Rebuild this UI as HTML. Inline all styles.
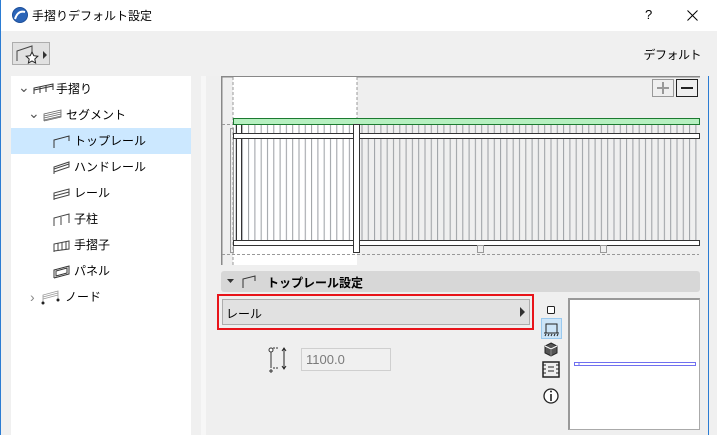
<!DOCTYPE html>
<html><head><meta charset="utf-8"><style>
*{margin:0;padding:0;box-sizing:border-box}
body{width:717px;height:435px;overflow:hidden;background:#f0f0f0;font-family:"Liberation Sans","Noto Sans CJK JP",sans-serif;font-size:12px;color:#000;position:relative}
.abs{position:absolute}
.title{left:0;top:0;width:717px;height:31px;background:#fff;border-left:1px solid #2b7cd3}
.tree{left:11px;top:76px;width:180px;height:359px;background:#fff}
.item{position:absolute;left:0;width:180px;height:26px;line-height:26px}
.sel{background:#cce8ff}
.lbl{position:absolute;font-size:12px}
</style></head><body>
<div class="abs title">
  <svg class="abs" style="left:11px;top:7px" width="16" height="16" viewBox="0 0 16 16"><circle cx="8" cy="8" r="7.5" fill="#2a64b8"/><path d="M3 12 Q6 3 13 5" stroke="#fff" stroke-width="2" fill="none"/><circle cx="8" cy="8" r="7.5" fill="none" stroke="#1d4f99"/></svg>
  <div class="lbl" style="left:31px;top:7px;font-size:12px">手摺りデフォルト設定</div>
  <div class="lbl" style="left:644px;top:7px;font-size:13px">?</div>
  <svg class="abs" style="left:686px;top:10px" width="11" height="11"><path d="M0.5 0.5L10.5 10.5M10.5 0.5L0.5 10.5" stroke="#000" stroke-width="1"/></svg>
</div>
<div class="abs" style="left:0;top:31px;width:1px;height:404px;background:#2b7cd3"></div>
<div class="abs" style="left:12px;top:42px;width:38px;height:23px;border:1px solid #adadad;background:#e1e1e1"></div>
<svg class="abs" style="left:14px;top:44px" width="36" height="20"><path d="M3 17V7L18 2V10" stroke="#444" fill="none"/><path d="M18 8l1.8 3.7 4 .5-3 2.8.8 4-3.6-2-3.6 2 .8-4-3-2.8 4-.5z" fill="#fff" stroke="#222"/><path d="M29 7l4 4-4 4z" fill="#333"/></svg>
<div class="lbl" style="right:16px;top:46px;white-space:nowrap;letter-spacing:-0.5px">デフォルト</div>

<div class="abs tree">
  <div class="item" style="top:0"><span class="lbl" style="left:7px;top:-2px;color:#555;font-size:14px">⌄</span>
    <svg class="abs" style="left:22px;top:7px" width="22" height="12"><path d="M1 11V5L20 1V7M7 4V10M13 3V9M1 7L20 3" stroke="#333" fill="none"/></svg>
    <span class="lbl" style="left:45px">手摺り</span></div>
  <div class="item" style="top:26px"><span class="lbl" style="left:17px;top:-2px;color:#555;font-size:14px">⌄</span>
    <svg class="abs" style="left:32px;top:7px" width="20" height="13"><path d="M1 12V5L18 1V8L1 12M1 7L18 3M1 9L18 5M1 11L18 7" stroke="#666" fill="none" stroke-width=".8"/></svg>
    <span class="lbl" style="left:55px">セグメント</span></div>
  <div class="item sel" style="top:52px">
    <svg class="abs" style="left:42px;top:7px" width="18" height="14"><path d="M1 13V5L16 1V6" stroke="#333" fill="none"/></svg>
    <span class="lbl" style="left:63px">トップレール</span></div>
  <div class="item" style="top:78px">
    <svg class="abs" style="left:42px;top:7px" width="18" height="14"><path d="M1 13V6L16 1V6L1 11M1 8L16 3" stroke="#444" fill="none"/></svg>
    <span class="lbl" style="left:63px">ハンドレール</span></div>
  <div class="item" style="top:104px">
    <svg class="abs" style="left:42px;top:7px" width="18" height="14"><path d="M1 13V6L16 2V8L1 12M1 9L16 5" stroke="#444" fill="none"/></svg>
    <span class="lbl" style="left:63px">レール</span></div>
  <div class="item" style="top:130px">
    <svg class="abs" style="left:42px;top:7px" width="18" height="14"><path d="M1 13V5L16 1V10M8 4V12" stroke="#444" fill="none"/></svg>
    <span class="lbl" style="left:63px">子柱</span></div>
  <div class="item" style="top:156px">
    <svg class="abs" style="left:42px;top:7px" width="18" height="14"><path d="M1 13V5L16 2V10L1 12M5 4V12M9 3V11M13 3V10" stroke="#444" fill="none"/></svg>
    <span class="lbl" style="left:63px">手摺子</span></div>
  <div class="item" style="top:182px">
    <svg class="abs" style="left:42px;top:7px" width="18" height="14"><path d="M1 13V5L16 1V9L1 13M3 11V6L14 3V8Z" stroke="#333" fill="none"/></svg>
    <span class="lbl" style="left:63px">パネル</span></div>
  <div class="item" style="top:208px"><span class="lbl" style="left:19px;color:#888;font-size:14px">›</span>
    <svg class="abs" style="left:30px;top:5px" width="20" height="16"><path d="M2 14V6L17 2V11M2 8L17 4M2 10L17 6" stroke="#999" fill="none" stroke-width=".8"/><circle cx="2" cy="14" r="1.5" fill="#222"/><circle cx="17" cy="11" r="1.5" fill="#222"/></svg>
    <span class="lbl" style="left:54px">ノード</span></div>
</div>
<div class="abs" style="left:201px;top:76px;width:5px;height:359px;background:#f7f7f7"></div>
<div class="abs" style="left:206px;top:76px;width:502px;height:359px;background:#efefef"></div>
<div class="abs" style="left:708px;top:76px;width:1px;height:359px;background:#2b7cd3"></div>

<svg class="abs" style="left:221px;top:76px" width="480" height="190">
  <defs><pattern id="b" x="12" y="0" width="6.3" height="10" patternUnits="userSpaceOnUse"><rect x="2.5" y="0" width="1" height="10" fill="#9a9ea2"/></pattern></defs>
  <rect x="0" y="0" width="479" height="189" fill="#efefef"/>
  <path d="M0.5 189V0.5H479" stroke="#888" stroke-width="2" fill="none"/>
  <rect x="12" y="1" width="124" height="188" fill="#fff"/>
  <path d="M12 1V189M136 1V48" stroke="#999" stroke-dasharray="3,2"/>
  <path d="M1 48.5H12M1 178.5H478" stroke="#999" stroke-dasharray="3,2"/>
  <rect x="12" y="49" width="466" height="116" fill="url(#b)"/>
  <rect x="9.5" y="52.5" width="3" height="124" fill="none" stroke="#999"/>
  <rect x="15.5" y="48.5" width="5" height="118" fill="none" stroke="#333"/>
  <rect x="12.5" y="42.5" width="466" height="6" fill="#b6f0c0" stroke="#1c7a30"/>
  <rect x="12.5" y="57.5" width="466" height="5" fill="#fff" stroke="#333"/>
  <rect x="12.5" y="164.5" width="466" height="5" fill="#fff" stroke="#333"/>
  <rect x="132.5" y="48.5" width="6" height="128" fill="#fff" stroke="#333"/>
  <rect x="256.5" y="169.5" width="6" height="7" fill="#efefef" stroke="#999"/>
  <rect x="379.5" y="169.5" width="6" height="7" fill="#efefef" stroke="#999"/>
  <rect x="431.5" y="3.5" width="21" height="17" fill="#efefef" stroke="#999"/>
  <path d="M442 6V18M436 12H448" stroke="#999" stroke-width="2"/>
  <rect x="455.5" y="3.5" width="21" height="17" fill="#efefef" stroke="#222"/>
  <path d="M460 12H472" stroke="#222" stroke-width="2"/>
</svg>

<div class="abs" style="left:221px;top:271px;width:479px;height:21px;background:#d7d7d7;border-radius:3px"></div>
<svg class="abs" style="left:227px;top:275px" width="40" height="14"><path d="M0 4H7L3.5 8z" fill="#333"/><path d="M16 13V4L28 1V6" stroke="#333" fill="none"/></svg>
<div class="lbl" style="left:267px;top:274px;font-weight:bold">トップレール設定</div>

<div class="abs" style="left:217px;top:294px;width:317px;height:36px;border:2px solid #e8141a"></div>
<div class="abs" style="left:222px;top:299px;width:308px;height:26px;background:#e1e1e1;border:1px solid #adadad"></div>
<div class="lbl" style="left:226px;top:305px">レール</div>
<svg class="abs" style="left:520px;top:307px" width="6" height="10"><path d="M0 0L5 5L0 10z" fill="#333"/></svg>

<svg class="abs" style="left:267px;top:345px" width="26" height="30"><circle cx="4" cy="5" r="2" fill="#fff" stroke="#333"/><path d="M4 7V23" stroke="#333"/><path d="M6 3H12M6 23H12" stroke="#333" stroke-dasharray="2,1"/><path d="M17 4V23M15 6L17 3L19 6M15 21L17 24L19 21" stroke="#222" fill="none"/><path d="M4 24V28M2 26H6" stroke="#333"/></svg>
<div class="abs" style="left:301px;top:348px;width:90px;height:23px;border:1px solid #cfcfcf;background:#f0f0f0;color:#7a7a7a;font-size:13px;line-height:21px;padding-left:4px">1100.0</div>

<svg class="abs" style="left:538px;top:300px" width="28" height="110">
  <rect x="9.5" y="6.5" width="7" height="7" fill="#fff" stroke="#222" rx="1"/>
  <rect x="3.5" y="18.5" width="20" height="20" fill="#cce4f7" stroke="#99c9ef"/>
  <path d="M8 33V24H19V33M6 33H21" stroke="#222" fill="none"/><path d="M7 36l1-2M10 36l1-2M13 36l1-2M16 36l1-2M19 36l1-2" stroke="#222"/>
  <path d="M13 43L19 46V53L13 56L7 53V46Z" fill="#555" stroke="#222"/><path d="M7 46L13 49L19 46" stroke="#fff" fill="none"/><path d="M13 49V56" stroke="#888"/>
  <rect x="5" y="62" width="16" height="15" fill="none" stroke="#222" stroke-width="1.5"/><path d="M5 65H8M5 69H8M5 73H8M18 65H21M18 69H21M18 73H21M10 67H16M10 71H16" stroke="#222"/>
  <circle cx="13" cy="96" r="7" fill="#fff" stroke="#222" stroke-width="1.3"/><path d="M13 94V101" stroke="#222" stroke-width="1.6"/><circle cx="13" cy="91.5" r="1" fill="#222"/>
</svg>

<div class="abs" style="left:568px;top:298px;width:132px;height:132px;background:#fff;border:1px solid #aaa;border-top:2px solid #999;border-left:2px solid #999"></div>
<svg class="abs" style="left:573px;top:361px" width="124" height="6"><rect x="1.5" y="1.5" width="121" height="3" fill="none" stroke="#7070f0"/><path d="M6 1V5" stroke="#7070f0"/></svg>
</body></html>
